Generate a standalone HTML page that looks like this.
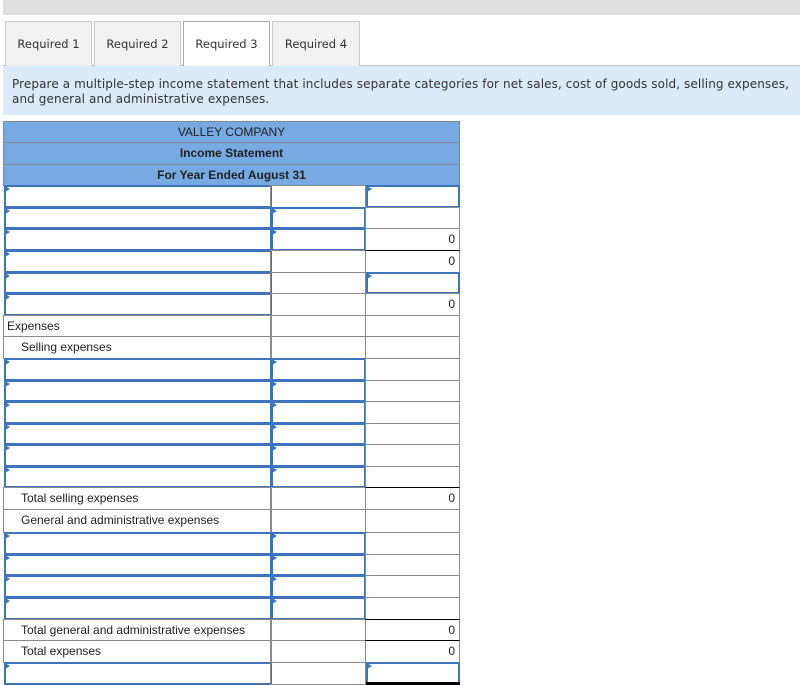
<!DOCTYPE html>
<html><head><style>
body{margin:0;width:809px;height:685px;position:relative;background:#fff;font-family:"Liberation Sans",Arial,sans-serif;overflow:hidden}
.a{position:absolute;box-sizing:border-box}
.tab{top:21px;height:45px;background:#f2f2f2;border:1px solid #ccc;border-bottom:none;font:11.5px "DejaVu Sans",Verdana,sans-serif;color:#333;text-align:center;line-height:44px}
.c{border:1px solid #8a8a8a;font-size:12px;color:#222;line-height:20px}
.in{border:2px solid #3d74bd;background:#fff}
.in:before{content:"";position:absolute;left:-1px;top:-1px;border-left:5px solid #3d74bd;border-top:3px solid transparent;border-bottom:3px solid transparent}
.h{background:#77aae3;border:1px solid #888;text-align:center;font-size:12px;color:#222;line-height:20px}
.v{text-align:right;padding-right:4px}
</style></head><body>
<div class="a" style="left:3px;top:0;width:797px;height:15px;background:#e0e0e0"></div>
<div class="a" style="left:3px;top:65px;width:797px;height:1px;background:#bbb"></div>
<div class="a tab" style="left:5px;width:87px">Required 1</div>
<div class="a tab" style="left:94px;width:87px">Required 2</div>
<div class="a tab" style="left:183px;width:87px;background:#fff;border-color:#aaa;height:46px">Required 3</div>
<div class="a tab" style="left:272px;width:88px">Required 4</div>
<div class="a" style="left:3px;top:66px;width:797px;height:49px;background:#dbeaf8;font:12px 'DejaVu Sans',Verdana,sans-serif;color:#333;padding:11px 0 0 9px;line-height:15px;white-space:nowrap;letter-spacing:0.1px">Prepare a multiple-step income statement that includes separate categories for net sales, cost of goods sold, selling expenses,<br>and general and administrative expenses.</div>
<div class="a h" style="left:3px;top:121px;width:457px;height:22px">VALLEY COMPANY</div>
<div class="a h" style="left:3px;top:142px;width:457px;height:23px;font-weight:bold">Income Statement</div>
<div class="a h" style="left:3px;top:164px;width:457px;height:22px;font-weight:bold">For Year Ended August 31</div>
<div id="t"></div>
<script>
var rows=[
[185,'i','p','i'],[207,'i','i','p'],[228,'i','i','0'],[250,'i','p','0b'],[272,'i','p','i'],[293,'i','p','0'],
[315,'Expenses','p','p'],[336,'>Selling expenses','p','p'],
[358,'i','i','p'],[380,'i','i','p'],[401,'i','i','p'],[423,'i','i','p'],[444,'i','i','p'],[466,'i','i','p'],
[487,'>Total selling expenses','p','0b'],[509,'>General and administrative expenses','p','p'],
[532,'i','i','p'],[554,'i','i','p'],[575,'i','i','p'],[597,'i','i','p'],
[619,'>Total general and administrative expenses','p','0b'],[640,'>Total expenses','p','0b'],[662,'i','p','i']];
var xs=[[3,269],[270,96],[365,95]],h='';
for(var r=0;r<rows.length;r++){var y=rows[r][0],n=(r<rows.length-1?rows[r+1][0]:684)-y+1;
for(var c=0;c<3;c++){var t=rows[r][c+1],x=xs[c][0],w=xs[c][1];
if(t=='i'){h+='<div class="a in" style="left:'+(x+1)+'px;top:'+y+'px;width:'+(w-1)+'px;height:'+n+'px"></div>';}
else{var st='left:'+x+'px;top:'+y+'px;width:'+w+'px;height:'+n+'px;',txt='',cl='a c';
if(t=='0'||t=='0b'){txt='0';cl+=' v';if(t=='0b')st+='border-top:1px solid #000;';}
else if(t!='p'){if(t[0]=='>'){txt=t.slice(1);st+='padding-left:17px;';}else{txt=t;st+='padding-left:3px;';}}
h+='<div class="'+cl+'" style="'+st+'">'+txt+'</div>';}}}
h+='<div class="a" style="left:366px;top:682px;width:94px;height:3px;background:#000"></div>';
document.getElementById('t').innerHTML=h;
</script>
</body></html>
